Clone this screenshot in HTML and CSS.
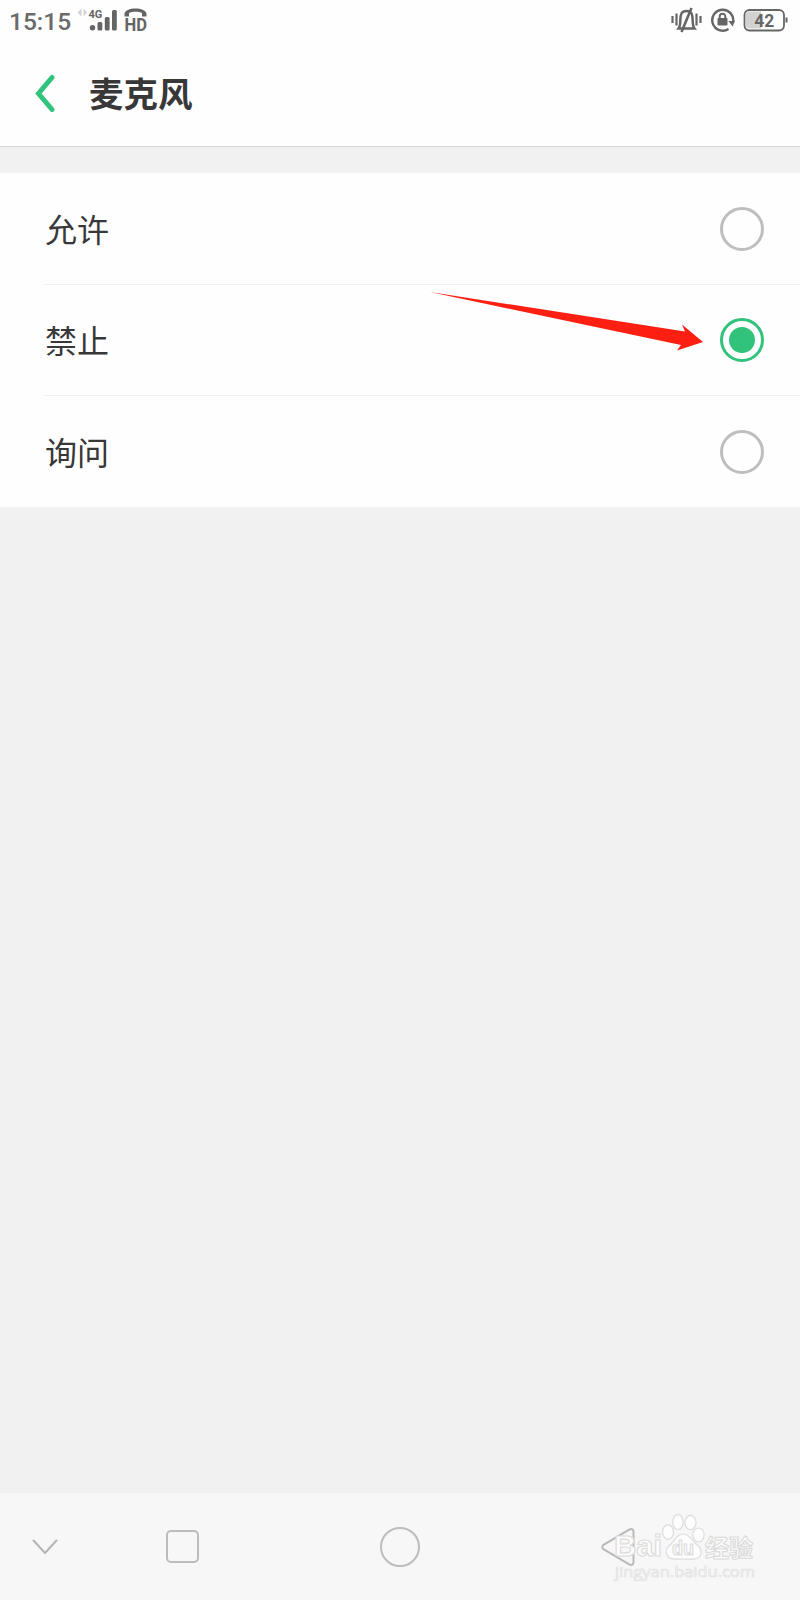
FILE: index.html
```html
<!DOCTYPE html>
<html lang="zh-CN">
<head>
    <meta charset="UTF-8">
    <meta name="viewport" content="width=device-width, initial-scale=1.0">
    <title>麦克风</title>
    <link rel="stylesheet" href="styles.css">
</head>
<body>
    <div class="screen">
        <div class="status-bar">
            <span class="time">15:15</span>
            <svg class="signal" width="76" height="44" viewBox="0 0 76 44">
                <path d="M3.500 8.500v8l-4-4zM5.500 8.500v8l3.500-4z" fill="#d2d2d2"/>
                <text x="10.500" y="18" class="net">4G</text>
                <g fill="#646464">
                    <circle cx="14.500" cy="27.800" r="2.700"/>
                    <rect x="19.500" y="22" width="4.800" height="8.400" rx="1.500"/>
                    <rect x="26.800" y="17" width="4.800" height="13.400" rx="1.500"/>
                    <rect x="34" y="10" width="4.800" height="20.400" rx="1.500"/>
                </g>
                <path d="M46.500 16.500v-2.500c0-7.500 22-7.500 22 0v2.500h-4.500v-3.500c-3-1.700-10-1.700-13 0v3.500z" fill="#646464"/>
                <text x="46.500" y="30.800" class="hd" textLength="22.500" lengthAdjust="spacingAndGlyphs">HD</text>
            </svg>
            <div class="status-icons">
                <svg width="32" height="28" viewBox="0 0 32 28" fill="none" stroke="#666" stroke-width="2.200">
                    <path d="M1.500 10v7M5.500 7.500v12M25.500 7.500v12M29.500 10v7"/>
                    <path d="M7.500 22.500h16c-1.500-2-1.800-4-1.800-8 0-6-1-9.500-6.200-9.500s-6.200 3.500-6.200 9.500c0 4-.3 6-1.800 8z" stroke-width="2.500"/>
                    <path d="M20.500 2L10.500 26" stroke-width="2.600"/>
                </svg>
                <svg width="24" height="24" viewBox="0 0 24 24" fill="none" stroke="#666" stroke-width="2.400">
                    <path d="M17.500 21a10.500 10.500 0 1 1 4.600-7"/>
                    <path d="M17.500 13h6.500l-2.500 5.500z" fill="#666" stroke="none"/>
                    <rect x="6.500" y="10" width="10" height="7.500" rx="1" fill="#666" stroke="none"/>
                    <path d="M8.700 11V8.500a2.800 2.800 0 0 1 5.600 0V11" stroke-width="2"/>
                </svg>
                <svg width="45" height="24" viewBox="0 0 45 24">
                    <path d="M6 3.500h12v17H6a3 3 0 0 1-3-3v-11a3 3 0 0 1 3-3z" fill="#d2d2d2"/>
                    <rect x="1.500" y="2" width="39.500" height="20.500" rx="5" fill="none" stroke="#666" stroke-width="1.800"/>
                    <rect x="42.500" y="9.500" width="2" height="5" fill="#666"/>
                    <text x="21.300" y="18.800" class="battery-level" text-anchor="middle">42</text>
                </svg>
            </div>
        </div>

        <div class="header">
            <svg class="back" width="20" height="38" viewBox="0 0 20 38">
                <path d="M17 3.500L3.500 19.500l13.500 16" fill="none" stroke="#31c27c" stroke-width="5" stroke-linecap="round"/>
            </svg>
            <h1>麦克风</h1>
        </div>

        <div class="options">
            <div class="option">
                <span>允许</span>
                <div class="radio"></div>
            </div>
            <div class="option">
                <span>禁止</span>
                <div class="radio checked"></div>
            </div>
            <div class="option">
                <span>询问</span>
                <div class="radio"></div>
            </div>
            <svg class="arrow" width="274" height="60" viewBox="0 0 274 60">
                <path d="M0 0L255 39.500 252 32.500 273 50 247 58.500 251 53z" fill="#fd1f12"/>
            </svg>
        </div>

        <div class="nav-bar">
            <svg width="26" height="16" viewBox="0 0 26 16">
                <path d="M1.500 1.500L13 14 24.500 1.500" fill="none" stroke="#b5b5b5" stroke-width="2" stroke-linecap="round"/>
            </svg>
            <div class="recent"></div>
            <div class="home"></div>
            <svg width="34" height="40" viewBox="0 0 34 40">
                <path d="M2.500 17.800L28.500 2.500Q32.500 1 32.500 5v30q0 4-4 2.500L2.500 22.200q-2.500-2.200 0-4.400z" fill="none" stroke="#b9b9b9" stroke-width="2"/>
            </svg>
            <svg class="watermark" width="150" height="76" viewBox="0 0 150 76">
                <g fill="#fdfdfd" stroke="#dcdcdc" stroke-width="1.200">
                    <text x="4" y="45.500" class="wm-logo" textLength="48" lengthAdjust="spacingAndGlyphs">Bai</text>
                    <ellipse cx="58" cy="22" rx="5.500" ry="7.200"/>
                    <ellipse cx="68" cy="12" rx="5.200" ry="7.500"/>
                    <ellipse cx="80.500" cy="12.500" rx="5.500" ry="7.200"/>
                    <ellipse cx="88.500" cy="25" rx="5.700" ry="7"/>
                    <path d="M73 24c-7 0-8 7-12 10-5 4-6 7-4 11 2 5 8 4 16 4s14 1 17-3c3-5 0-9-4-12-5-4-6-10-13-10z"/>
                    <text x="62" y="44.500" class="wm-du" textLength="22" lengthAdjust="spacingAndGlyphs">du</text>
                    <text x="95" y="47" class="wm-cn">经验</text>
                    <text x="5" y="67" class="wm-url" textLength="140" lengthAdjust="spacingAndGlyphs">jingyan.baidu.com</text>
                </g>
            </svg>
        </div>
    </div>
</body>
</html>
```

FILE: styles.css
```css
body {
    margin: 0;
    padding: 0;
    background-color: #f1f1f1;
    font-family: "Noto Sans CJK SC", sans-serif;
    color: #383838;
}

.screen {
    display: flex;
    flex-direction: column;
    width: 800px;
    height: 1600px;
}

.status-bar {
    display: flex;
    align-items: center;
    box-sizing: border-box;
    height: 44px;
    padding: 0 12px 0 9px;
    background-color: #fefefe;
}

.time {
    width: 69px;
    font-family: Roboto, sans-serif;
    font-size: 24.500px;
    line-height: 44px;
    font-weight: 500;
    color: #6a6a6a;
}

.net {
    font: bold 11px Roboto, sans-serif;
    fill: #646464;
}

.hd {
    font: bold 18px Roboto, sans-serif;
    fill: #646464;
}

.status-icons {
    display: flex;
    align-items: center;
    gap: 8px;
    margin-left: auto;
    padding-bottom: 4px;
}

.battery-level {
    font: bold 17.500px Roboto, sans-serif;
    fill: #666;
}

.header {
    display: flex;
    align-items: center;
    box-sizing: border-box;
    height: 103px;
    padding: 0 35px 4px;
    background-color: #fefefe;
    border-bottom: 1px solid #d4d4d4;
}

h1 {
    margin: 0 0 2px 34px;
    font-size: 34.500px;
    line-height: 50px;
    font-weight: 700;
}

.options {
    position: relative;
    margin-top: 26px;
    padding-left: 45px;
    background-color: #fefefe;
}

.option {
    display: flex;
    align-items: center;
    justify-content: space-between;
    box-sizing: border-box;
    height: 111px;
    padding-right: 36px;
    font-size: 32px;
}

.option span {
    padding-bottom: 2px;
}

.option + .option {
    border-top: 1px solid #f0f0f0;
}

.option:nth-child(3) {
    height: 112px;
}

.radio {
    display: flex;
    align-items: center;
    justify-content: center;
    box-sizing: border-box;
    width: 44px;
    height: 44px;
    border: 3px solid #bebebe;
    border-radius: 50%;
}

.radio.checked {
    border-color: #31c27c;
}

.radio.checked::after {
    content: "";
    width: 26px;
    height: 26px;
    border-radius: 50%;
    background-color: #31c27c;
}

/* pointer drawn over the rows */
.arrow {
    position: absolute;
    top: 119px;
    left: 430px;
}

.nav-bar {
    position: relative;
    display: grid;
    grid-template-columns: 89px 186px 1fr 186px 89px;
    align-items: center;
    justify-items: center;
    height: 107px;
    margin-top: auto;
    background-color: #f7f7f7;
}

.recent {
    box-sizing: border-box;
    width: 33px;
    height: 33px;
    border: 2px solid #bcbcbc;
    border-radius: 5px;
}

.home {
    box-sizing: border-box;
    width: 40px;
    height: 40px;
    border: 2px solid #bcbcbc;
    border-radius: 50%;
}

.watermark {
    position: absolute;
    top: 17px;
    left: 610px;
}

.wm-logo {
    font: bold 30px "Liberation Sans", sans-serif;
}

.wm-du {
    font: bold 20px "Liberation Sans", sans-serif;
}

.wm-cn {
    font: bold 24px "Noto Sans CJK SC", sans-serif;
}

.wm-url {
    font: 15px "Open Sans", sans-serif;
    stroke: #e0e0e0;
    stroke-width: 0.7px;
}
```
